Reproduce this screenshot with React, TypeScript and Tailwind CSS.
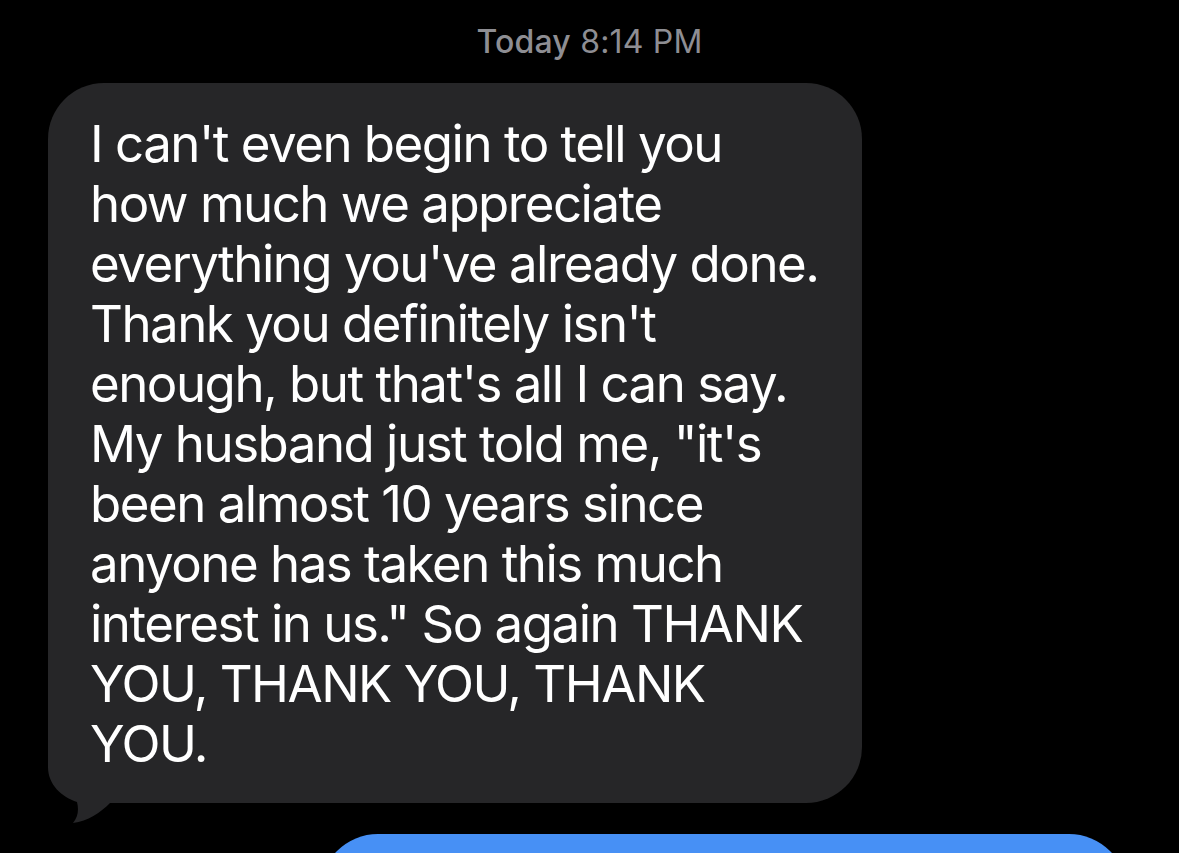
const lines = [
  "I can't even begin to tell you",
  "how much we appreciate",
  "everything you've already done.",
  "Thank you definitely isn't",
  "enough, but that's all I can say.",
  'My husband just told me, "it\'s',
  "been almost 10 years since",
  "anyone has taken this much",
  'interest in us." So again THANK',
  "YOU, THANK YOU, THANK",
  "YOU.",
];

function Tail() {
  // bottom-left tail of the incoming bubble
  return (
    <svg
      className="absolute left-0 bottom-[-22px]"
      width="92"
      height="82"
      viewBox="0 0 92 82"
    >
      <path
        d="M0 0 L0 24 C0 42 14 54 29 59 C31 67 30 74 25 80 C40 78 52 70 62 60 L92 60 L92 0 Z"
        fill="#262628"
      />
    </svg>
  );
}

export default function App() {
  return (
    <div
      className="h-[853px] w-full overflow-hidden bg-black"
      style={{ fontFamily: "Inter, 'Noto Sans', sans-serif" }}
    >
      <div className="pt-[26px] text-center text-[32px] leading-[32px] tracking-[0.2px] text-[#8e8e93]">
        <span className="font-medium">Today</span> 8:14 PM
      </div>

      <div className="mt-[25px] pl-[48px]">
        <div className="relative w-[814px] rounded-[56px] bg-[#262628] pt-[31px] pb-[29px] pl-[42px] text-[51px] leading-[60px] tracking-[-1.5px] text-white">
          <Tail />
          <div className="relative">
            {lines.map((l) => (
              <div key={l} className="whitespace-nowrap">
                {l}
              </div>
            ))}
          </div>
        </div>
      </div>

      <div className="mt-[31px] ml-[320px] h-[120px] w-[807px] rounded-[58px] bg-[#4790f5]" />
    </div>
  );
}
